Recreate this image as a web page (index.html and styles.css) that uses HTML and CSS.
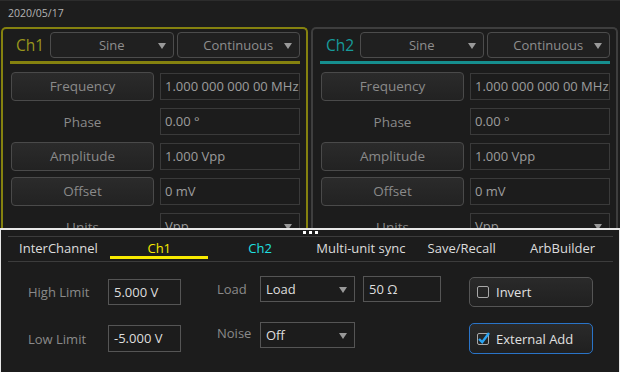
FILE: index.html
```html
<!DOCTYPE html>
<html lang="en">

<head>
    <meta charset="UTF-8">
    <title>AFG</title>
    <link rel="stylesheet" href="styles.css">
</head>

<body>
    <div class="screen">
        <div class="datebar">2020/05/17</div>

        <div class="channels">
            <div class="chan ch1">
                <div class="chan-head">
                    <span class="chan-name">Ch1</span>
                    <div class="drop">Sine</div>
                    <div class="drop">Continuous</div>
                </div>
                <div class="chan-line"></div>
                <div class="params">
                    <div class="pbtn">Frequency</div>
                    <div class="pval">1.000 000 000 00 MHz</div>
                    <div class="plabel">Phase</div>
                    <div class="pval">0.00 °</div>
                    <div class="pbtn">Amplitude</div>
                    <div class="pval">1.000 Vpp</div>
                    <div class="pbtn">Offset</div>
                    <div class="pval">0 mV</div>
                    <div class="plabel">Units</div>
                    <div class="pval pdrop">Vpp</div>
                </div>
            </div>

            <div class="chan ch2">
                <div class="chan-head">
                    <span class="chan-name">Ch2</span>
                    <div class="drop">Sine</div>
                    <div class="drop">Continuous</div>
                </div>
                <div class="chan-line"></div>
                <div class="params">
                    <div class="pbtn">Frequency</div>
                    <div class="pval">1.000 000 000 00 MHz</div>
                    <div class="plabel">Phase</div>
                    <div class="pval">0.00 °</div>
                    <div class="pbtn">Amplitude</div>
                    <div class="pval">1.000 Vpp</div>
                    <div class="pbtn">Offset</div>
                    <div class="pval">0 mV</div>
                    <div class="plabel">Units</div>
                    <div class="pval pdrop">Vpp</div>
                </div>
            </div>
        </div>

        <div class="drawer">
            <div class="handle"><i></i><i></i><i></i></div>
            <div class="tabs">
                <div class="tab">InterChannel</div>
                <div class="tab tab-ch1">Ch1</div>
                <div class="tab tab-ch2">Ch2</div>
                <div class="tab">Multi-unit sync</div>
                <div class="tab">Save/Recall</div>
                <div class="tab">ArbBuilder</div>
            </div>

            <div class="form">
                <div class="col col-limits">
                    <div class="row">
                        <span class="flabel lim">High Limit</span>
                        <div class="field lim-field">5.000 V</div>
                    </div>
                    <div class="row">
                        <span class="flabel lim">Low Limit</span>
                        <div class="field lim-field">-5.000 V</div>
                    </div>
                </div>

                <div class="col col-load">
                    <div class="row">
                        <span class="flabel short">Load</span>
                        <div class="field sel">Load</div>
                        <div class="field ohm">50 Ω</div>
                    </div>
                    <div class="row">
                        <span class="flabel short">Noise</span>
                        <div class="field sel">Off</div>
                    </div>
                </div>

                <div class="col col-checks">
                    <div class="chk">
                        <span class="box"></span>
                        Invert
                    </div>
                    <div class="chk chk-on">
                        <span class="box">
                            <svg width="13" height="13" viewBox="0 0 13 13">
                                <path d="M2 7 L5.2 10.2 L12 1" fill="none" stroke="#2aa4f4" stroke-width="2.4" />
                            </svg>
                        </span>
                        External Add
                    </div>
                </div>
            </div>
        </div>
    </div>
</body>

</html>
```

FILE: styles.css
```css
* {
    box-sizing: border-box;
    margin: 0;
    padding: 0;
}

body {
    background-color: #1d1d1d;
    font-family: "Open Sans", "DejaVu Sans", sans-serif;
}

.screen {
    width: 620px;
    height: 372px;
    overflow: hidden;
    display: flex;
    flex-direction: column;
}

.datebar {
    height: 27px;
    padding: 3px 8px 0;
    font-size: 10.5px;
    line-height: 18px;
    color: #b4b4b4;
    border-top: 1px solid #2c2c2c;
}

.channels {
    display: flex;
    gap: 3px;
    padding: 0 2px 0 1px;
    height: 201px;
    overflow: hidden;
}

.chan {
    flex: 1;
    border: 2px solid #3e3e3e;
    border-bottom: none;
    border-radius: 5px 5px 0 0;
    background-color: #1c1c1c;
    height: 240px;
}

.ch1 {
    border-color: #85820f;
}

.chan-head {
    display: flex;
    align-items: center;
    gap: 3px;
    padding: 3px 6px 0 13px;
}

.chan-name {
    width: 31px;
    font-size: 15.5px;
    color: #99961c;
}

.ch2 .chan-name {
    color: #179a9a;
}

.drop {
    position: relative;
    flex: 1;
    height: 26px;
    border: 1px solid #4c4c4c;
    border-radius: 4px;
    background-color: #202020;
    text-align: center;
    font-size: 13px;
    line-height: 24px;
    color: #8e8e8e;
}

.drop::after,
.pdrop::after,
.sel::after {
    content: "";
    position: absolute;
    right: 7px;
    top: 10px;
    border-left: 4px solid transparent;
    border-right: 4px solid transparent;
    border-top: 6px solid #999;
}

.chan-line {
    height: 3px;
    margin: 3px 6px 0 7px;
    background-color: #85820f;
}

.ch2 .chan-line {
    background-color: #168f8f;
}

.params {
    display: grid;
    grid-template-columns: 143px 140px;
    grid-auto-rows: 29px;
    column-gap: 6px;
    row-gap: 6px;
    align-items: center;
    padding: 8px 0 0 8px;
}

.pbtn {
    height: 29px;
    border: 1px solid #4a4a4a;
    border-radius: 4px;
    background: linear-gradient(#2b2b2b, #222);
    text-align: center;
    font-size: 13.5px;
    line-height: 27px;
    color: #8a8a8a;
}

.plabel {
    text-align: center;
    font-size: 13.5px;
    color: #8a8a8a;
}

.pval {
    position: relative;
    height: 27px;
    border: 1px solid #3a3a3a;
    padding-left: 4px;
    font-size: 13px;
    line-height: 25px;
    color: #9c9c9c;
    white-space: nowrap;
}

.drawer {
    position: relative;
    flex: 1;
    border: 1px solid #e8e8e8;
    border-top-width: 2px;
    border-bottom: none;
    background-color: #1c1c1c;
    padding: 6px 6px 0 7px;
}

.handle {
    position: absolute;
    top: 1px;
    left: 302px;
    display: flex;
    gap: 3px;
}

.handle i {
    width: 3px;
    height: 3px;
    background-color: #fff;
}

.tabs {
    display: flex;
    height: 26px;
    border-top: 1px solid #3c3c3c;
    border-bottom: 1px solid #3c3c3c;
}

.tab {
    flex: 1;
    text-align: center;
    font-size: 13px;
    line-height: 23px;
    color: #dcdcdc;
}

.tab-ch1 {
    color: #f8ea00;
    background: linear-gradient(#f8ea00, #f8ea00) no-repeat center bottom 2px / 98px 3px;
}

.tab-ch2 {
    color: #20e0e0;
}

.form {
    display: flex;
    padding: 14px 0 0 20px;
}

.col {
    display: flex;
    flex-direction: column;
    gap: 20px;
}

.row {
    display: flex;
    align-items: center;
    height: 26px;
}

.col-limits {
    margin-top: 3px;
    gap: 20px;
}

.col-limits .row:last-child {
    height: 27px;
}

.col-limits .row:last-child .field {
    height: 27px;
}

.col-load {
    margin-left: 36px;
}

.col-checks {
    margin-left: 28px;
    margin-top: 1px;
    gap: 16px;
}

.flabel {
    font-size: 13px;
    color: #8a8a8a;
}

.lim {
    width: 80px;
}

.short {
    width: 43px;
    align-self: flex-start;
    line-height: 26px;
}

.col-load .row:last-child .short {
    line-height: 22px;
}

.field {
    position: relative;
    height: 26px;
    border: 1px solid #555;
    padding-left: 5px;
    font-size: 13px;
    line-height: 24px;
    color: #dedede;
}

.lim-field {
    width: 73px;
}

.sel {
    width: 95px;
}

.ohm {
    width: 78px;
    margin-left: 8px;
}

.chk {
    display: flex;
    align-items: center;
    gap: 7px;
    width: 124px;
    height: 30px;
    padding-left: 7px;
    border: 1px solid #555;
    border-radius: 5px;
    background: linear-gradient(#2a2a2a, #202020);
    font-size: 13px;
    color: #e0e0e0;
}

.chk-on {
    height: 31px;
    border-color: #2a74c8;
}

.box {
    display: flex;
    width: 12px;
    height: 12px;
    border: 1px solid #a8a8a8;
    border-radius: 2px;
}

.chk-on .box svg {
    margin: -2px 0 0 -1px;
    flex: none;
}
```
